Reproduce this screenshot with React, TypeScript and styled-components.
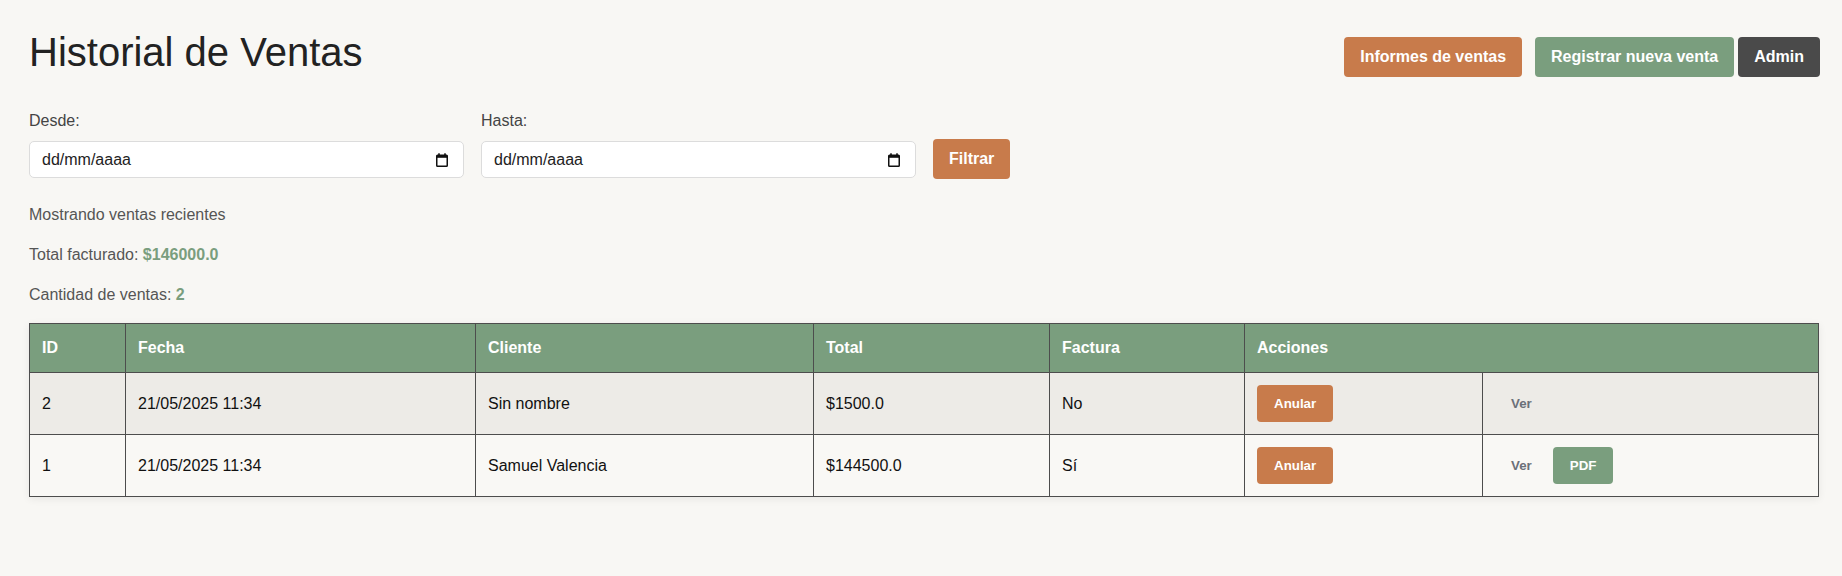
import React from "react";
import styled, { createGlobalStyle } from "styled-components";

const GlobalStyle = createGlobalStyle`
  html, body {
    margin: 0;
    padding: 0;
    background: #f8f7f4;
  }
  body {
    font-family: "Liberation Sans", Arial, Helvetica, sans-serif;
    font-size: 16px;
    line-height: 24px;
    color: #222;
  }
  * { box-sizing: border-box; }
`;

const Page = styled.div`
  padding: 29px 23px 40px 29px;
  min-height: 576px;
`;

const Header = styled.header`
  display: flex;
  justify-content: space-between;
  align-items: flex-start;
`;

const Title = styled.h1`
  margin: 0;
  font-size: 40px;
  line-height: 46px;
  font-weight: 400;
  color: #222;
`;

const ButtonGroup = styled.div`
  display: flex;
  align-items: center;
  margin-top: 8px;
  margin-right: -1px;
`;

type Tone = "orange" | "green" | "dark";

const toneBg: Record<Tone, string> = {
  orange: "#c87b4b",
  green: "#7a9e7e",
  dark: "#4a4a4a",
};

const TopButton = styled.button<{ $tone: Tone; $gap?: number }>`
  font-family: inherit;
  font-size: 16px;
  font-weight: 700;
  line-height: 20px;
  padding: 10px 16px;
  border: none;
  border-radius: 4px;
  color: #fff;
  background: ${(p) => toneBg[p.$tone]};
  margin-left: ${(p) => p.$gap ?? 0}px;
  cursor: pointer;
  white-space: nowrap;
`;

const Filters = styled.form`
  display: flex;
  align-items: flex-end;
  gap: 17px;
  margin-top: 32px;
  margin-bottom: 25px;
`;

const Field = styled.div`
  display: flex;
  flex-direction: column;
  width: 435px;
`;

const Label = styled.label`
  display: block;
  font-size: 16px;
  line-height: 24px;
  color: #444;
  margin-bottom: 8px;
`;

const DateBox = styled.div`
  display: flex;
  align-items: center;
  height: 37px;
  background: #fff;
  border: 1px solid #dcdcdc;
  border-radius: 5px;
  padding: 0 15px 0 12px;
`;

const DateInput = styled.input`
  flex: 1;
  min-width: 0;
  border: none;
  outline: none;
  background: transparent;
  font-family: inherit;
  font-size: 16px;
  color: #222;
  padding: 0;
  &::placeholder {
    color: #222;
    opacity: 1;
  }
`;

const FilterButton = styled.button`
  font-family: inherit;
  font-size: 16px;
  font-weight: 700;
  line-height: 20px;
  padding: 10px 16px;
  border: none;
  border-radius: 4px;
  color: #fff;
  background: #c87b4b;
  margin-bottom: -1px;
  cursor: pointer;
`;

const Summary = styled.div`
  display: flex;
  flex-direction: column;
  gap: 16px;
  margin-bottom: 16px;
`;

const Line = styled.p`
  margin: 0;
  font-size: 16px;
  line-height: 24px;
  color: #555;
`;

const Highlight = styled.strong`
  color: #7a9e7e;
  font-weight: 700;
`;

const Table = styled.table`
  width: 100%;
  border-collapse: collapse;
  table-layout: fixed;
  box-shadow: 0 2px 8px rgba(0, 0, 0, 0.07);
  border: 1px solid #4d4d4d;
`;

const HeadCell = styled.th`
  background: #7a9e7e;
  color: #fff;
  font-weight: 700;
  font-size: 16px;
  line-height: 24px;
  text-align: left;
  padding: 12px;
  border: 1px solid #4d4d4d;
`;

const Row = styled.tr<{ $shaded?: boolean }>`
  background: ${(p) => (p.$shaded ? "#edebe7" : "#f9f8f5")};
`;

const Cell = styled.td`
  font-size: 16px;
  line-height: 24px;
  color: #111;
  padding: 12px;
  border: 1px solid #4d4d4d;
  vertical-align: middle;
`;

const Actions = styled.div`
  display: flex;
  align-items: center;
  gap: 5px;
`;

type ActionKind = "danger" | "link" | "pdf";

const ActionButton = styled.button<{ $kind: ActionKind }>`
  font-family: inherit;
  font-size: 13.33px;
  font-weight: 700;
  line-height: 17px;
  padding: ${(p) => (p.$kind === "link" ? "10px 16px" : "10px 17px")};
  border: none;
  border-radius: 4px;
  cursor: pointer;
  color: ${(p) => (p.$kind === "link" ? "#6b7079" : "#fff")};
  background: ${(p) =>
    p.$kind === "danger" ? "#c87b4b" : p.$kind === "pdf" ? "#7a9e7e" : "transparent"};
`;

const CalendarIcon = () => (
  <svg width="12" height="14" viewBox="0 0 12 14" aria-hidden="true">
    <rect x="2.2" y="0.3" width="1.6" height="2.6" fill="#111" />
    <rect x="8.2" y="0.3" width="1.6" height="2.6" fill="#111" />
    <rect x="0.75" y="2.2" width="10.5" height="11" rx="0.8" fill="none" stroke="#111" strokeWidth="1.5" />
    <rect x="0.75" y="2.2" width="10.5" height="2.6" fill="#111" />
  </svg>
);

type Sale = {
  id: number;
  fecha: string;
  cliente: string;
  total: string;
  factura: string;
  pdf: boolean;
};

const sales: Sale[] = [
  { id: 2, fecha: "21/05/2025 11:34", cliente: "Sin nombre", total: "$1500.0", factura: "No", pdf: false },
  { id: 1, fecha: "21/05/2025 11:34", cliente: "Samuel Valencia", total: "$144500.0", factura: "Sí", pdf: true },
];

export default function App() {
  return (
    <>
      <GlobalStyle />
      <Page>
        <Header>
          <Title>Historial de Ventas</Title>
          <ButtonGroup>
            <TopButton $tone="orange">Informes de ventas</TopButton>
            <TopButton $tone="green" $gap={13}>Registrar nueva venta</TopButton>
            <TopButton $tone="dark" $gap={4}>Admin</TopButton>
          </ButtonGroup>
        </Header>

        <Filters onSubmit={(e) => e.preventDefault()}>
          <Field>
            <Label htmlFor="desde">Desde:</Label>
            <DateBox>
              <DateInput id="desde" type="text" placeholder="dd/mm/aaaa" />
              <CalendarIcon />
            </DateBox>
          </Field>
          <Field>
            <Label htmlFor="hasta">Hasta:</Label>
            <DateBox>
              <DateInput id="hasta" type="text" placeholder="dd/mm/aaaa" />
              <CalendarIcon />
            </DateBox>
          </Field>
          <FilterButton type="submit">Filtrar</FilterButton>
        </Filters>

        <Summary>
          <Line>Mostrando ventas recientes</Line>
          <Line>
            Total facturado: <Highlight>$146000.0</Highlight>
          </Line>
          <Line>
            Cantidad de ventas: <Highlight>2</Highlight>
          </Line>
        </Summary>

        <Table>
          <colgroup>
            <col style={{ width: 96 }} />
            <col style={{ width: 350 }} />
            <col style={{ width: 338 }} />
            <col style={{ width: 236 }} />
            <col style={{ width: 195 }} />
            <col style={{ width: 238 }} />
            <col />
          </colgroup>
          <thead>
            <tr>
              <HeadCell>ID</HeadCell>
              <HeadCell>Fecha</HeadCell>
              <HeadCell>Cliente</HeadCell>
              <HeadCell>Total</HeadCell>
              <HeadCell>Factura</HeadCell>
              <HeadCell colSpan={2}>Acciones</HeadCell>
            </tr>
          </thead>
          <tbody>
            {sales.map((s, i) => (
              <Row key={s.id} $shaded={i % 2 === 0}>
                <Cell>{s.id}</Cell>
                <Cell>{s.fecha}</Cell>
                <Cell>{s.cliente}</Cell>
                <Cell>{s.total}</Cell>
                <Cell>{s.factura}</Cell>
                <Cell>
                  <ActionButton $kind="danger">Anular</ActionButton>
                </Cell>
                <Cell>
                  <Actions>
                    <ActionButton $kind="link">Ver</ActionButton>
                    {s.pdf && <ActionButton $kind="pdf">PDF</ActionButton>}
                  </Actions>
                </Cell>
              </Row>
            ))}
          </tbody>
        </Table>
      </Page>
    </>
  );
}
